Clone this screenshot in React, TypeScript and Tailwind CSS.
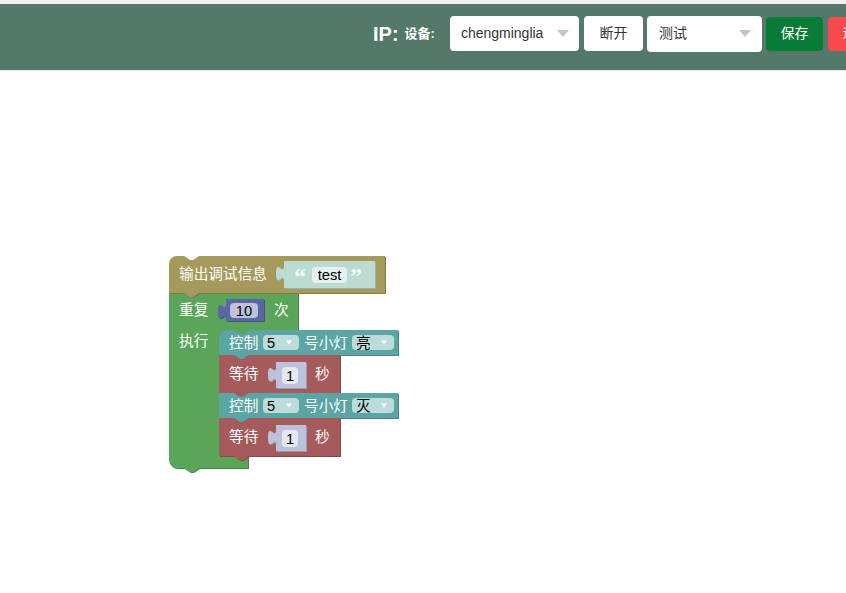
import React from "react";

const FONT = "'Liberation Sans', 'Noto Sans CJK SC', sans-serif";

function Arrow({ x, y, fill }: { x: number; y: number; fill: string }) {
  return <polygon points={`${x},${y} ${x + 6},${y} ${x + 3},${y + 4}`} fill={fill} />;
}

function Block({ d, color, dark }: { d: string; color: string; dark: string }) {
  return (
    <g>
      <path d={d} fill={dark} transform="translate(1,1)" />
      <path d={d} fill={color} />
    </g>
  );
}

// statement block path
function stmt(L: number, T: number, R: number, B: number, round: boolean) {
  const top = round
    ? `M ${L},${T + 8} a 8,8 0 0,1 8,-8 H ${L + 15}`
    : `M ${L},${T} H ${L + 15}`;
  return `${top} l 6,4 3,0 6,-4 H ${R} V ${B} H ${L + 30} l -6,4 -3,0 -6,-4 H ${L} z`;
}

// value block path with output tab
function val(L: number, T: number, R: number, B: number) {
  return `M ${L},${T} H ${R} V ${B} H ${L} V ${T + 20} c 0,-10 -8,8 -8,-7.5 s 8,2.5 8,-7.5 z`;
}

function T({ x, y, children, fill = "#ffffff", anchor = "start" }: { x: number; y: number; children: React.ReactNode; fill?: string; anchor?: "start" | "middle" }) {
  return (
    <text x={x} y={y} fill={fill} fontSize="14.67" fontFamily={FONT} dominantBaseline="central" textAnchor={anchor}>
      {children}
    </text>
  );
}

function ControlBlock({ top, state }: { top: number; state: string }) {
  const c = top + 12.5;
  return (
    <g>
      <T x={229} y={c}>控制</T>
      <rect x={263} y={top + 5} width={36} height={15} rx={4} fill="#bddbdb" />
      <T x={267} y={c} fill="#000">5</T>
      <Arrow x={286} y={c - 2} fill="#ffffff" />
      <T x={304} y={c}>号小灯</T>
      <rect x={352} y={top + 5} width={42} height={15} rx={4} fill="#bddbdb" />
      <T x={356} y={c} fill="#000">{state}</T>
      <Arrow x={381} y={c - 2} fill="#ffffff" />
    </g>
  );
}

function WaitBlock({ top }: { top: number }) {
  const c = top + 19;
  return (
    <g>
      <T x={229} y={c}>等待</T>
      <Block d={val(276, top + 7, 306, top + 33)} color="#bdc2db" dark="#979bb0" />
      <rect x={282} y={top + 12} width={16} height={17} rx={4} fill="#e5e7f1" />
      <T x={290} y={c + 1.5} fill="#000" anchor="middle">1</T>
      <T x={315} y={c}>秒</T>
    </g>
  );
}

function Workspace() {
  const green = `M 169,293 H 184 l 6,4 3,0 6,-4 H 298 V 330 H 249 l -6,4 -3,0 -6,-4 H 227 a 8,8 0 0,0 -8,8 V 449 a 8,8 0 0,0 8,8 H 248 V 468 H 199 l -6,4 -3,0 -6,-4 H 177 a 8,8 0 0,1 -8,-8 z`;
  return (
    <svg width={846} height={522} className="absolute left-0 top-0">
      <g transform="translate(0,-71)">
        {/* repeat block */}
        <Block d={green} color="#5ba55b" dark="#498449" />
        <T x={179} y={310}>重复</T>
        <Block d={val(226, 299, 264, 321)} color="#5b67a5" dark="#495284" />
        <rect x={230} y={303} width={28} height={15} rx={4} fill="#bdc2db" />
        <T x={244} y={311} fill="#000" anchor="middle">10</T>
        <T x={274} y={310}>次</T>
        <T x={179} y={341}>执行</T>

        {/* print block */}
        <Block d={stmt(169, 256, 385, 293, true)} color="#a5995b" dark="#847a49" />
        <T x={179} y={274}>输出调试信息</T>
        <Block d={val(284, 261, 375, 288)} color="#bddbd1" dark="#97afa7" />
        <text x={294} y={284} fill="#f4faf8" fontSize="24" fontWeight="bold" fontFamily="'Liberation Serif', serif">“</text>
        <rect x={312} y={267} width={35} height={16} rx={4} fill="#e5f1ed" />
        <T x={329.5} y={275} fill="#000" anchor="middle">test</T>
        <text x={350} y={284} fill="#f4faf8" fontSize="24" fontWeight="bold" fontFamily="'Liberation Serif', serif">”</text>

        {/* statements */}
        <Block d={stmt(219, 330, 398, 355, true)} color="#5ba5a5" dark="#498484" />
        <ControlBlock top={330} state="亮" />
        <Block d={stmt(219, 355, 340, 393, false)} color="#a55b5b" dark="#844949" />
        <WaitBlock top={355} />
        <Block d={stmt(219, 393, 398, 418, false)} color="#5ba5a5" dark="#498484" />
        <ControlBlock top={393} state="灭" />
        <Block d={stmt(219, 418, 340, 456, false)} color="#a55b5b" dark="#844949" />
        <WaitBlock top={418} />
      </g>
    </svg>
  );
}

function SelectArrow() {
  return (
    <svg width="12" height="7" viewBox="0 0 12 7">
      <polygon points="0,0 12,0 6,7" fill="#c0c4cc" />
    </svg>
  );
}

export default function App() {
  return (
    <div className="w-[846px] h-[593px] bg-white flex flex-col overflow-hidden" style={{ fontFamily: FONT }}>
      <div className="h-[4px] bg-[#f1f1f1] shrink-0" />
      <div className="h-[66px] shrink-0 bg-[#54786a] flex items-center pb-[7px] pl-[373px] overflow-hidden">
        <span className="text-[20px] font-bold text-white shrink-0 leading-none">IP:</span>
        <span className="ml-[6px] text-[13px] font-bold text-white shrink-0">设备:</span>
        <div className="ml-[15px] w-[129px] h-[35px] shrink-0 bg-white rounded-[4px] flex items-center justify-between pl-[11px] pr-[10px] text-[14px] text-[#333]">
          <span>chengminglia</span>
          <SelectArrow />
        </div>
        <div className="ml-[5px] w-[59px] h-[35px] shrink-0 bg-white rounded-[4px] flex items-center justify-center text-[14px] text-[#333]">
          断开
        </div>
        <div className="ml-[4px] w-[115px] h-[36px] shrink-0 bg-white rounded-[4px] flex items-center justify-between pl-[12px] pr-[11px] text-[14px] text-[#333]">
          <span>测试</span>
          <SelectArrow />
        </div>
        <div className="ml-[4px] w-[57px] h-[34px] shrink-0 bg-[#097b39] rounded-[4px] flex items-center justify-center text-[14px] text-white">
          保存
        </div>
        <div className="ml-[5px] w-[57px] h-[34px] shrink-0 bg-[#f84a4d] rounded-[4px] flex items-center justify-center text-[14px] text-white">
          退出
        </div>
      </div>
      <div className="h-[1px] bg-[#e2e8e5] shrink-0" />
      <div className="relative flex-1">
        <Workspace />
      </div>
    </div>
  );
}
